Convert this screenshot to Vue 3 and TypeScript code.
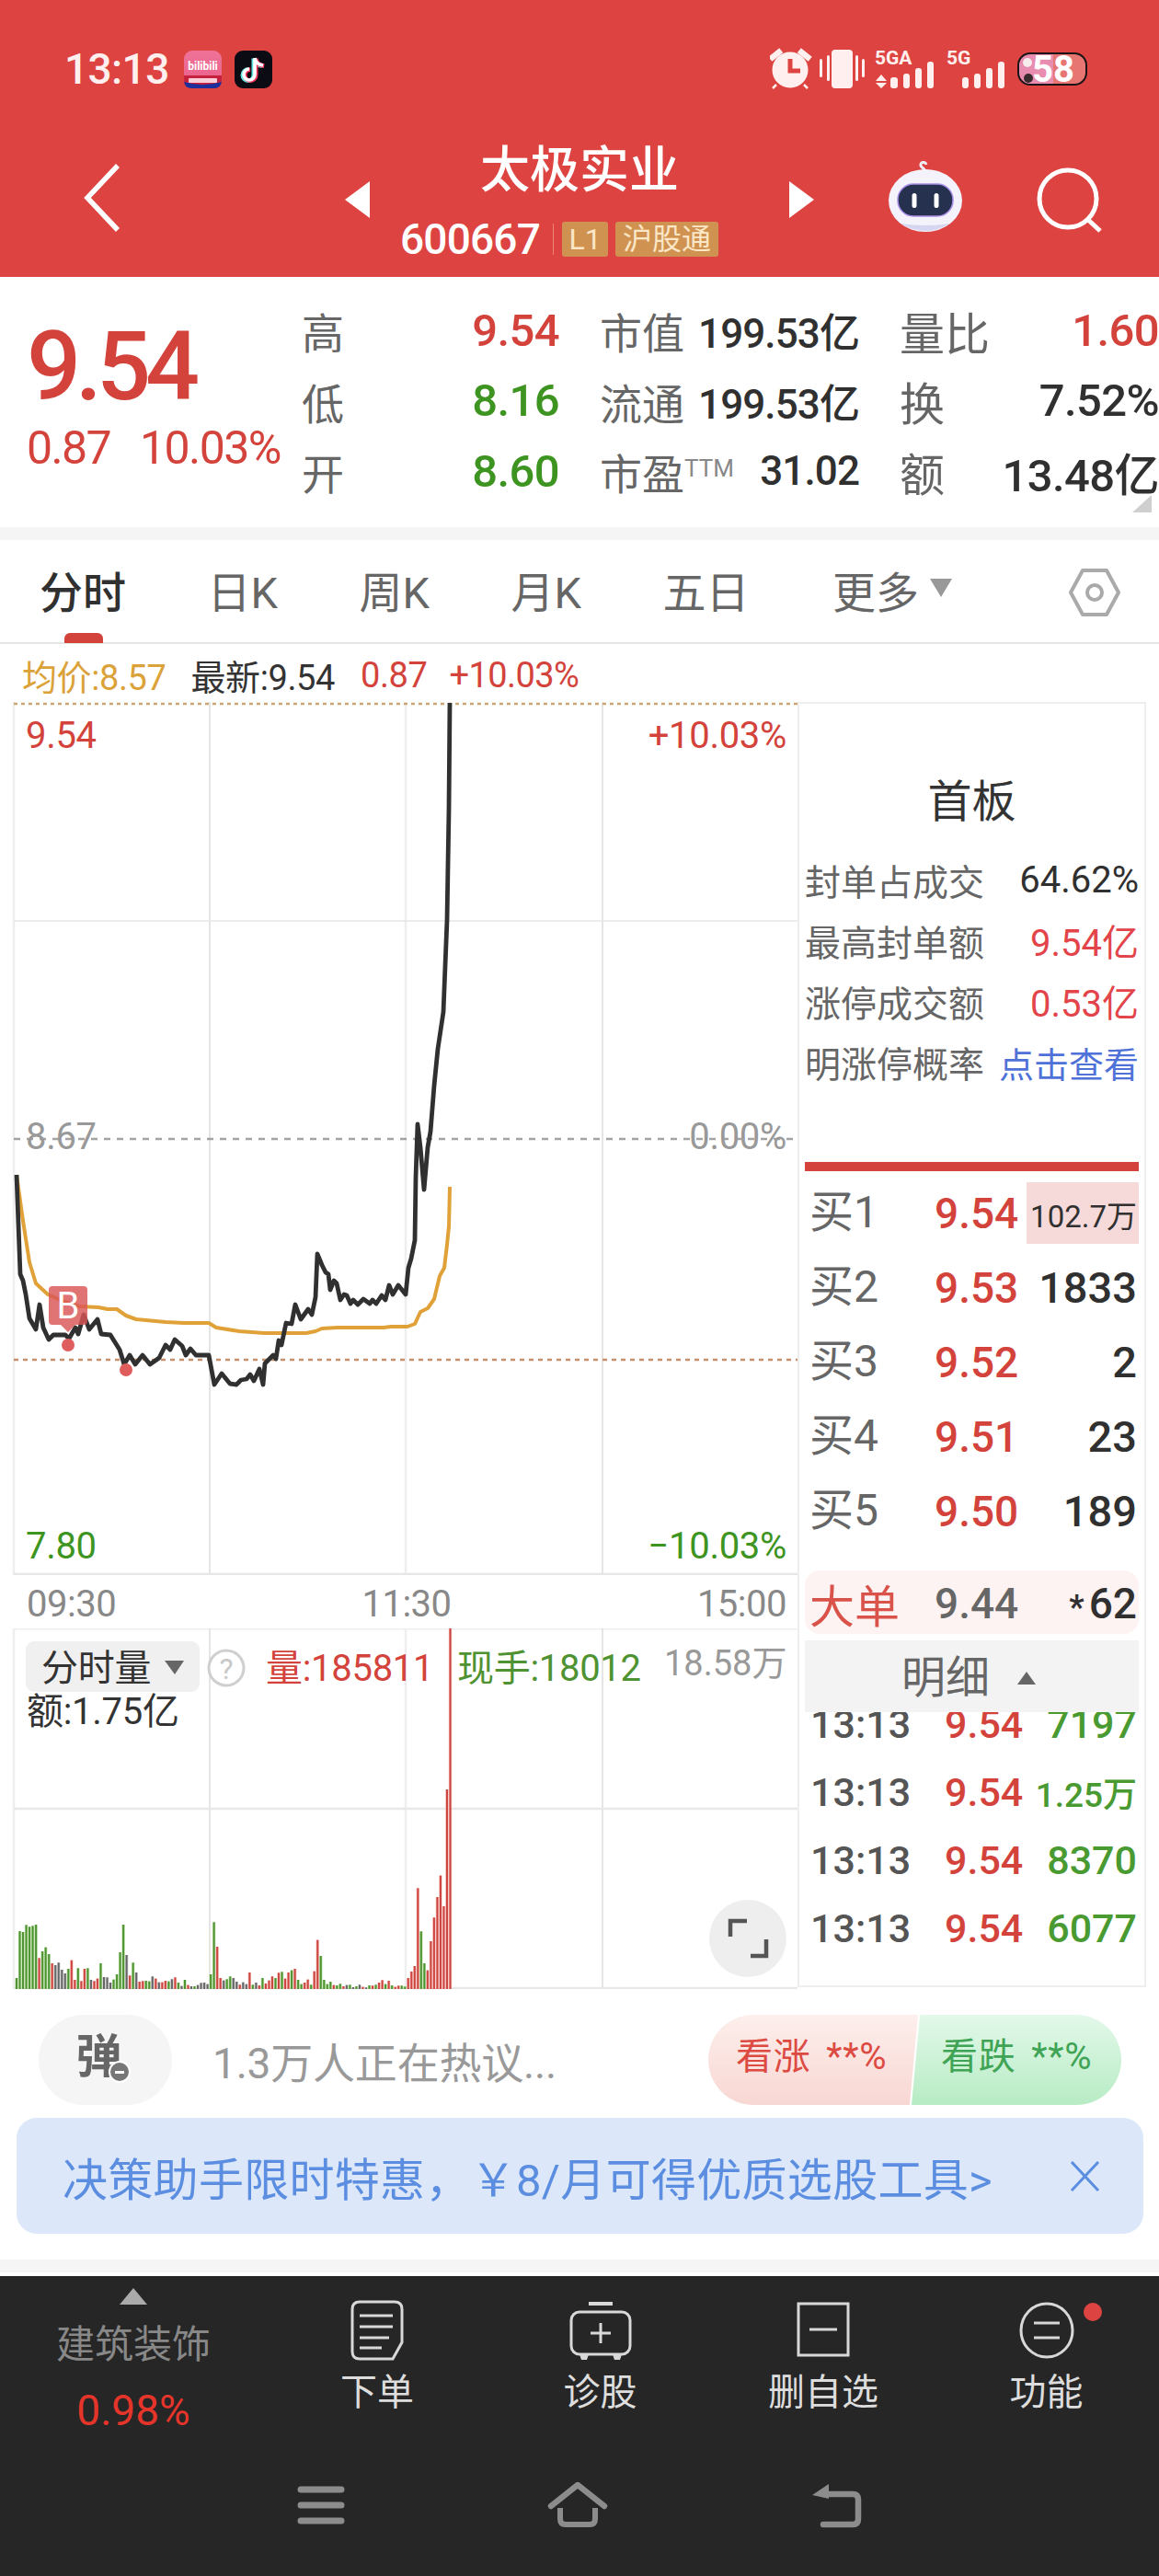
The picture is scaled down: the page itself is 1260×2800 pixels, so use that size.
<script setup lang="ts">
const blackLine =
  '18,1277 22,1385 25,1392 28,1407 32,1433 39,1445 43,1418 47,1443 53,1456 58,1451 71,1451 75,1455 82,1443 85,1450 91,1429 97,1445 106,1434 110,1450 120,1451 130,1467 135,1483 141,1473 147,1483 155,1473 163,1483 173,1476 180,1462 185,1467 190,1456 198,1463 202,1473 207,1466 213,1473 227,1473 233,1505 241,1493 250,1504 257,1505 262,1500 268,1499 272,1494 276,1501 282,1488 286,1505 288,1482 297,1473 300,1477 303,1457 306,1462 311,1438 317,1439 321,1418 327,1434 335,1423 339,1429 343,1410 345,1363 350,1375 354,1383 357,1385 359,1402 363,1392 366,1395 370,1413 374,1407 377,1408 381,1417 384,1413 389,1418 395,1412 402,1417 405,1413 409,1417 415,1408 419,1413 423,1397 427,1407 433,1397 441,1407 444,1378 447,1368 451,1348 452,1280 454,1222 457,1247 461,1293 465,1247 468,1230 472,1180 476,1140 482,1100 484,1050 486,1000 488,880 489,764'
const avgLine =
  '18,1277 25,1327 32,1372 39,1395 52,1407 70,1415 87,1420 107,1421 117,1423 127,1423 137,1430 148,1434 180,1437 200,1438 227,1438 235,1443 260,1447 287,1449 333,1449 343,1447 350,1444 367,1443 417,1443 425,1442 443,1442 451,1439 457,1426 465,1422 472,1412 478,1387 483,1378 486,1353 488,1333 489,1290'

const raw =
  'g510 g357 g360 g337 g343 g340 g336 r445 g423 g410 g432 r462 n468 n460 n483 n495 g480 r452 r516 g478 r520 r480 g478 n516 r520 r512 g462 n507 n508 n525 g515 g498 g426 g336 n435 r502 g460 n492 r522 r520 g519 g521 n505 r512 n524 r524 r519 g521 n514 r508 g525 n536 g516 r533 n537 g537 n533 n526 n525 n530 g498 g328 r408 r510 n518 g514 g505 n510 n522 r532 n524 n530 r492 g532 n525 r534 g510 r528 r518 r505 g510 r493 g490 r512 r492 g485 r480 g516 g530 r525 r515 g532 r488 r386 g438 g516 g530 g522 r533 g534 g529 r537 n533 g532 n540 g537 n532 r539 n541 g534 r535 g532 r525 r517 g530 r519 g534 r539 r535 g535 g538 r510 r489 r471 r217 g358 g462 r485 r390 r313 r246 r176 r276 r-105 r-630'
const colours: Record<string, string> = { g: '#4f9232', r: '#cc4540', n: '#666666' }
const halos: Record<string, string> = { g: '#bfe3ac', r: '#f6c0bb', n: '#cfcfcf' }
const tokens = raw.split(' ')
const step = (489.5 - 18) / (tokens.length - 1)
const bars = tokens.map((t, i) => {
  const top = 1980 + Number(t.slice(1)) / 3
  return {
    x: 18 + i * step,
    y: top,
    h: 2162 - top,
    c: colours[t[0]],
    halo: halos[t[0]]
  }
})

const stats = [
  [
    { label: '高', value: '9.54', cls: 'red' },
    { label: '市值', value: '199.53亿', cls: 'ink small' },
    { label: '量比', value: '1.60', cls: 'red', wide: true }
  ],
  [
    { label: '低', value: '8.16', cls: 'green' },
    { label: '流通', value: '199.53亿', cls: 'ink small' },
    { label: '换', value: '7.52%', cls: 'ink', wide: true }
  ],
  [
    { label: '开', value: '8.60', cls: 'green' },
    { label: '市盈', sup: 'TTM', value: '31.02', cls: 'ink small' },
    { label: '额', value: '13.48亿', cls: 'ink', wide: true }
  ]
]
const tabs = ['分时', '日K', '周K', '月K', '五日']
const seal = [
  { k: '封单占成交', v: '64.62%', c: 'ink' },
  { k: '最高封单额', v: '9.54亿', c: 'bright' },
  { k: '涨停成交额', v: '0.53亿', c: 'bright' },
  { k: '明涨停概率', v: '点击查看', c: 'blue' }
]
const book = [
  { k: '买1', p: '9.54', q: '102.7万', hot: true },
  { k: '买2', p: '9.53', q: '1833' },
  { k: '买3', p: '9.52', q: '2' },
  { k: '买4', p: '9.51', q: '23' },
  { k: '买5', p: '9.50', q: '189' }
]
const ticks = [
  { q: '7197' },
  { q: '1.25万', tiny: true },
  { q: '8370' },
  { q: '6077' }
]
</script>

<template>
  <div class="page">
    <header class="head">
      <div class="status">
        <span class="clock">13:13</span>
        <svg class="app-icon" viewBox="0 0 41 41">
          <defs>
            <linearGradient id="bl" x1="0" y1="0" x2="0" y2="1">
              <stop offset="0" stop-color="#ef7299" />
              <stop offset="1" stop-color="#ea5f8a" />
            </linearGradient>
          </defs>
          <rect width="41" height="41" rx="9" fill="url(#bl)" />
          <path d="M0 27 L41 27 L41 32 Q41 41 32 41 L9 41 Q0 41 0 32Z" fill="#c8213f" />
          <path d="M0 34 Q20 40 41 34 L41 32 Q41 41 32 41 L9 41 Q0 41 0 32Z" fill="#1c2f9a" />
          <text x="20.5" y="21" class="bili">bilibili</text>
          <rect x="5" y="30" width="31" height="5" rx="1" fill="#f7cfd8" />
        </svg>
        <svg class="app-icon" viewBox="0 0 41 41">
          <rect width="41" height="41" rx="9" fill="#0b0b14" />
          <path d="M22 8 V26 a6 6 0 1 1 -6 -6 M22 8 q1 7 9 8" fill="none" stroke="#62e6e6" stroke-width="4.6" transform="translate(-1.2 0.6)" />
          <path d="M22 8 V26 a6 6 0 1 1 -6 -6 M22 8 q1 7 9 8" fill="none" stroke="#f0365b" stroke-width="4.6" transform="translate(1.2 0.6)" />
          <path d="M22 8 V26 a6 6 0 1 1 -6 -6 M22 8 q1 7 9 8" fill="none" stroke="#ffffff" stroke-width="3.6" />
        </svg>
        <span class="spacer"></span>
        <svg class="sys" width="345" height="54" viewBox="838 48 345 54">
          <g fill="#fff0ef">
            <circle cx="860" cy="76" r="19.5" />
            <path d="M860 64 V77 H871" fill="none" stroke="#dd4441" stroke-width="5" />
            <path d="M838 62 L848 54 L850.500 57 L840.500 65Z M882 62 L872 54 L869.500 57 L879.500 65Z M845 92 L841 96 M875 92 L879 96" stroke="#fff0ef" stroke-width="2.500" />
            <rect x="892" y="64" width="3" height="20" rx="1.500" />
            <rect x="900" y="60" width="3" height="28" rx="1.500" />
            <rect x="905" y="54" width="23" height="42" rx="4" />
            <rect x="931" y="60" width="3" height="28" rx="1.500" />
            <rect x="938" y="64" width="3" height="20" rx="1.500" />
            <text x="952" y="70" class="net">5GA</text>
            <path d="M959 81 L965 88 H953Z M959 96 L953 90 H965Z" />
            <rect x="969" y="84" width="8" height="12" rx="3" />
            <rect x="983" y="80" width="7" height="16" rx="3" />
            <rect x="996" y="74" width="7" height="22" rx="3" />
            <rect x="1009" y="67" width="7" height="29" rx="3" />
            <text x="1030" y="70" class="net">5G</text>
            <rect x="1047" y="84" width="7" height="12" rx="3" />
            <rect x="1060" y="80" width="7" height="16" rx="3" />
            <rect x="1073" y="74" width="7" height="22" rx="3" />
            <rect x="1086" y="67" width="7" height="29" rx="3" />
          </g>
          <rect x="1108" y="58" width="74" height="34" rx="13" fill="#e77672" />
          <path d="M1121 58 H1146 V92 H1121 Q1108 92 1108 75 Q1108 58 1121 58Z" fill="#e88cb0" />
          <circle cx="1118" cy="68" r="5" fill="#f6ecec" />
          <circle cx="1119" cy="85" r="5" fill="#3a2c2c" />
          <rect x="1108" y="58" width="74" height="34" rx="13" fill="none" stroke="#1a1416" stroke-width="2" />
          <text x="1146" y="89" class="batt">58</text>
        </svg>
      </div>

      <div class="nav">
        <svg class="back" width="40" height="76" viewBox="0 0 40 76">
          <path d="M37 3 L4 38 L37 73" fill="none" stroke="#fff" stroke-width="5.500" />
        </svg>
        <svg class="tri-l" width="27" height="40" viewBox="0 0 27 40"><path d="M27 0 V40 L0 20Z" fill="#fff" /></svg>
        <div class="name">
          <div class="title">太极实业</div>
          <div class="code">
            <span class="num">600667</span>
            <span class="sep"></span>
            <span class="tag l1">L1</span>
            <span class="tag hk">沪股通</span>
          </div>
        </div>
        <svg class="tri-r" width="27" height="40" viewBox="0 0 27 40"><path d="M0 0 V40 L27 20Z" fill="#fff" /></svg>
        <svg class="robot" width="82" height="78" viewBox="0 0 82 78">
          <path d="M41 12 C41 8 37 8 36 5 C35 1 41 0 42 4" fill="none" stroke="#f0ecf8" stroke-width="3" />
          <ellipse cx="41" cy="43" rx="40" ry="34" fill="#f4f2fb" />
          <path d="M14 68 Q41 84 68 68 Q41 72 14 68Z" fill="#d5d6f0" />
          <rect x="11" y="25" width="60" height="35" rx="17" fill="#26304f" stroke="#a98fe8" stroke-width="1.500" />
          <rect x="26.500" y="35" width="5" height="16" rx="2.500" fill="#fff" />
          <rect x="50.500" y="35" width="5" height="16" rx="2.500" fill="#fff" />
        </svg>
        <svg class="find" width="72" height="72" viewBox="0 0 72 72">
          <circle cx="34" cy="34" r="31" fill="none" stroke="#fff" stroke-width="5" />
          <path d="M55 56 L69 69" stroke="#fff" stroke-width="5" />
        </svg>
      </div>
    </header>

    <section class="quote">
      <div class="main">
        <div class="big">9.54</div>
        <div class="chg"><span>0.87</span><span>10.03%</span></div>
      </div>
      <div class="grid">
        <template v-for="(row, r) in stats" :key="r">
          <div v-for="cell in row" :key="cell.label" class="cell">
            <span class="lab" :class="{ wide: cell.wide }">{{ cell.label }}<sup v-if="cell.sup">{{ cell.sup }}</sup></span>
            <span class="val" :class="cell.cls">{{ cell.value }}</span>
          </div>
        </template>
      </div>
      <svg class="corner" width="21" height="19" viewBox="0 0 21 19"><path d="M21 0 V19 H0Z" fill="#cfcfcf" /></svg>
    </section>
    <div class="band"></div>

    <nav class="tabs">
      <span v-for="(t, i) in tabs" :key="t" class="tab" :class="{ on: i === 0 }">{{ t }}</span>
      <span class="tab more">更多<i></i></span>
      <svg class="hex" width="58" height="54" viewBox="0 0 58 54">
        <path d="M16 3 H42 L55 27 L42 51 H16 L3 27Z" fill="none" stroke="#aaa" stroke-width="4" stroke-linejoin="round" />
        <circle cx="29" cy="27" r="8" fill="none" stroke="#aaa" stroke-width="4" />
      </svg>
    </nav>

    <div class="legend">
      <span class="gold">均价:8.57</span>
      <span class="ink2">最新:9.54</span>
      <span class="red2">0.87</span>
      <span class="red3">+10.03%</span>
    </div>

    <div class="body">
      <div class="charts">
        <svg class="price" width="867" height="949" viewBox="0 763 867 949">
          <g stroke="#e6e6e6" stroke-width="1.500">
            <line x1="15" y1="763" x2="15" y2="1712" stroke-width="2.500" stroke="#eeeeee" />
            <line x1="228" y1="763" x2="228" y2="1712" stroke="#dddddd" />
            <line x1="441" y1="763" x2="441" y2="1712" stroke-width="2.500" stroke="#eeeeee" />
            <line x1="655" y1="763" x2="655" y2="1712" stroke="#dddddd" />
            <line x1="15" y1="1001" x2="867" y2="1001" />
            <line x1="15" y1="1711" x2="867" y2="1711" stroke-width="2.500" />
          </g>
          <line x1="15" y1="765" x2="867" y2="765" stroke="#c9a876" stroke-width="2.500" stroke-dasharray="4 4" />
          <line x1="15" y1="1238" x2="867" y2="1238" stroke="#a3a3a3" stroke-width="2.500" stroke-dasharray="7 7" />
          <line x1="15" y1="1478" x2="867" y2="1478" stroke="#c8906a" stroke-width="2.500" stroke-dasharray="5 5" />

          <text x="28" y="813" class="t40 c-red">9.54</text>
          <text x="855" y="813" class="t40 c-red end">+10.03%</text>
          <text x="28" y="1249" class="t40 c-gray">8.67</text>
          <text x="855" y="1249" class="t40 c-gray end">0.00%</text>
          <text x="28" y="1694" class="t40 c-green">7.80</text>
          <text x="855" y="1694" class="t40 c-green end">−10.03%</text>

          <polyline :points="avgLine" fill="none" stroke="#e0a238" stroke-width="4" stroke-linejoin="round" />
          <polyline :points="blackLine" fill="none" stroke="#303030" stroke-width="4.800" stroke-linejoin="round" />

          <path d="M57 1398 H91 Q95 1398 95 1402 V1436 Q95 1440 91 1440 H82 L74 1448 L66 1440 H57 Q53 1440 53 1436 V1402 Q53 1398 57 1398Z" fill="#d95555" opacity=".82" />
          <text x="74" y="1433" class="mark">B</text>
          <circle cx="74" cy="1462" r="7" fill="#df5d5d" />
          <circle cx="137" cy="1489" r="7" fill="#df5d5d" />
        </svg>

        <div class="axis"><span>09:30</span><span>11:30</span><span>15:00</span></div>

        <svg class="vol" width="867" height="392" viewBox="0 1770 867 392">
          <g stroke="#e8e8e8">
            <line x1="15" y1="1770" x2="867" y2="1770" stroke-width="3" stroke="#eeeeee" />
            <line x1="15" y1="1770" x2="15" y2="2162" stroke-width="2.500" stroke="#eeeeee" />
            <line x1="228" y1="1770" x2="228" y2="2162" stroke-width="1.500" stroke="#dddddd" />
            <line x1="441" y1="1770" x2="441" y2="2162" stroke-width="2.500" stroke="#eeeeee" />
            <line x1="655" y1="1770" x2="655" y2="2162" stroke-width="1.500" stroke="#dddddd" />
            <line x1="15" y1="1966" x2="867" y2="1966" stroke-width="2.500" />
            <line x1="15" y1="2161" x2="867" y2="2161" stroke-width="2.500" />
          </g>
          <g v-for="(b, i) in bars" :key="i">
            <rect :x="b.x - 1.7" :y="b.y" width="3.400" :height="b.h" :fill="b.halo" />
            <rect :x="b.x - 1" :y="b.y" width="2" :height="b.h" :fill="b.c" />
          </g>
          <rect x="28" y="1784" width="189" height="55" rx="9" fill="#f0f0f0" />
          <text x="45" y="1827" class="t40 c-ink">分时量</text>
          <path d="M179 1805 H200 L190 1820Z" fill="#666" />
          <circle cx="246" cy="1813" r="19" fill="#fff" stroke="#cfcfcf" stroke-width="3" />
          <text x="246" y="1825" class="q">?</text>
          <text x="289" y="1827" class="t40 c-red">量:185811</text>
          <text x="497" y="1827" class="t40 c-green2">现手:18012</text>
          <text x="722" y="1821" class="t38 c-gray">18.58万</text>
          <text x="29" y="1874" class="t40 c-ink">额:1.75亿</text>
          <ellipse cx="813" cy="2107" rx="42" ry="42" fill="#eeeeee" />
          <path d="M794 2105 V2088 H812 M833 2108 V2126 H816" fill="none" stroke="#555" stroke-width="4.500" />
        </svg>
      </div>

      <aside class="panel">
        <div class="ptitle">首板</div>
        <div v-for="s in seal" :key="s.k" class="srow">
          <span class="sk">{{ s.k }}</span>
          <span class="sv" :class="s.c">{{ s.v }}</span>
        </div>
        <div class="redbar"></div>
        <div v-for="b in book" :key="b.k" class="brow">
          <span class="bk">{{ b.k }}</span>
          <span class="bp">{{ b.p }}</span>
          <span class="bq" :class="{ hot: b.hot }">{{ b.q }}</span>
        </div>
        <div class="large">
          <span class="lk">大单</span>
          <span class="lp">9.44</span>
          <span class="lq"><b>*</b>62</span>
        </div>
        <div class="detail">明细<i></i></div>
        <div class="ticks">
          <div class="ticks-in">
            <div v-for="(t, i) in ticks" :key="i" class="trow">
              <span class="tt">13:13</span>
              <span class="tp">9.54</span>
              <span class="tq" :class="{ tiny: t.tiny }">{{ t.q }}</span>
            </div>
          </div>
        </div>
      </aside>
    </div>

    <div class="social">
      <div class="danmu">弹<i></i></div>
      <div class="hotline">1.3万人正在热议...</div>
      <div class="vote">
        <span class="up">看涨 **%</span>
        <span class="down">看跌 **%</span>
      </div>
    </div>

    <div class="banner">
      <span>决策助手限时特惠，￥8/月可得优质选股工具&gt;</span>
      <svg width="33" height="33" viewBox="0 0 33 33"><path d="M2 1 L31 32 M31 1 L2 32" stroke="#5b8de0" stroke-width="3" /></svg>
    </div>
    <div class="after"></div>
    <div class="band"></div>
    <div class="gap"></div>

    <footer class="foot">
      <div class="dock">
        <div class="sector">
          <i class="up-tri"></i>
          <span class="sname">建筑装饰</span>
          <span class="spct">0.98%</span>
        </div>
        <div class="act">
          <svg width="58" height="66" viewBox="0 0 58 66">
            <path d="M10 2 H48 Q56 2 56 10 V46 L46 64 H10 Q2 64 2 56 V10 Q2 2 10 2Z" fill="none" stroke="#d8d8d8" stroke-width="3" />
            <path d="M10 17 H46 M10 29 H46 M10 41 H42 M10 52 H34" stroke="#d8d8d8" stroke-width="3" />
          </svg>
          <span>下单</span>
        </div>
        <div class="act">
          <svg width="68" height="66" viewBox="0 0 68 66">
            <path d="M21 4 H47" stroke="#d8d8d8" stroke-width="4" />
            <rect x="2" y="13" width="64" height="46" rx="9" fill="none" stroke="#d8d8d8" stroke-width="3" />
            <path d="M34 25 V47 M23 36 H45" stroke="#d8d8d8" stroke-width="3" />
            <path d="M11 59 H21 L19 65 H13Z M47 59 H57 L55 65 H49Z" fill="#d8d8d8" />
          </svg>
          <span>诊股</span>
        </div>
        <div class="act">
          <svg width="58" height="66" viewBox="0 0 58 66">
            <rect x="2" y="4" width="54" height="56" fill="none" stroke="#d8d8d8" stroke-width="3" />
            <path d="M14 32 H44" stroke="#d8d8d8" stroke-width="3" />
          </svg>
          <span>删自选</span>
        </div>
        <div class="act fn">
          <svg width="62" height="66" viewBox="0 0 62 66">
            <ellipse cx="31" cy="33" rx="28" ry="29" fill="none" stroke="#d8d8d8" stroke-width="3" />
            <path d="M17 25 H45 M17 41 H45" stroke="#d8d8d8" stroke-width="3" />
          </svg>
          <i class="dot"></i>
          <span>功能</span>
        </div>
      </div>
      <div class="sysnav">
        <svg width="52" height="50" viewBox="0 0 52 50">
          <path d="M4 8 H48 M4 25 H48 M4 42 H48" stroke="#8c8c8c" stroke-width="7" stroke-linecap="round" />
        </svg>
        <svg width="66" height="50" viewBox="0 0 66 50">
          <path d="M4 26 L33 3 L62 26" fill="none" stroke="#8c8c8c" stroke-width="6.500" stroke-linecap="round" stroke-linejoin="round" />
          <path d="M14 28 V40 Q14 46 20 46 H46 Q52 46 52 40 V28" fill="none" stroke="#8c8c8c" stroke-width="6" />
        </svg>
        <svg width="56" height="50" viewBox="0 0 56 50">
          <path d="M20 2 L2 14 L20 18Z" fill="#8c8c8c" />
          <path d="M14 13 H46 Q52 13 52 19 V40 Q52 46 46 46 H14" fill="none" stroke="#8c8c8c" stroke-width="6.500" stroke-linecap="round" />
        </svg>
      </div>
    </footer>
  </div>
</template>

<style>
html,
body {
  margin: 0;
  background: #fff;
}
</style>

<style scoped>
.page {
  width: 1260px;
  height: 2800px;
  overflow: hidden;
  display: flex;
  flex-direction: column;
  background: #fff;
  font-family: Roboto, "Noto Sans CJK SC", sans-serif;
  color: #333;
}
.head {
  height: 301px;
  background: #dd4441;
  flex: none;
}
.status {
  height: 42px;
  padding: 54px 78px 0 70px;
  display: flex;
  align-items: center;
}
.clock {
  width: 130px;
  font-size: 46px;
  font-weight: 500;
  color: #fff0ef;
  letter-spacing: -0.6px;
  line-height: 42px;
}
.app-icon {
  width: 41px;
  height: 41px;
  margin-right: 14px;
}
.spacer {
  flex: 1;
}
.bili {
  font: 700 12px Roboto, sans-serif;
  fill: #fff;
  text-anchor: middle;
}
.net {
  font: 700 21px Roboto, sans-serif;
}
.batt {
  font: 700 40px Roboto, sans-serif;
  fill: #fff;
  text-anchor: middle;
}
.nav {
  position: relative;
  height: 205px;
  display: flex;
  align-items: center;
}
.back,
.tri-l,
.tri-r,
.robot,
.find {
  position: absolute;
}
.back {
  left: 91px;
  top: 81px;
}
.tri-l {
  left: 375px;
  top: 101px;
}
.tri-r {
  left: 858px;
  top: 101px;
}
.robot {
  left: 965px;
  top: 79px;
}
.find {
  left: 1127px;
  top: 86px;
}
.name {
  width: 100%;
  padding-top: 62px;
  display: flex;
  flex-direction: column;
  align-items: center;
  align-self: flex-start;
}
.title {
  font-size: 54px;
  line-height: 56px;
  font-weight: 500;
  color: #fff;
}
.code {
  margin-top: 27px;
  margin-left: -44px;
  display: flex;
  align-items: center;
  height: 38px;
}
.num {
  font-size: 46px;
  font-weight: 500;
  color: #fff;
  line-height: 38px;
  letter-spacing: -0.8px;
}
.sep {
  width: 1px;
  height: 34px;
  background: #e98a6f;
  margin: 0 9px 0 14px;
}
.tag {
  height: 38px;
  line-height: 38px;
  border-radius: 3px;
  background: #cf9251;
  color: #fbe6c6;
  font-size: 32px;
  text-align: center;
}
.l1 {
  width: 50px;
  margin-right: 8px;
}
.hk {
  width: 112px;
  font-size: 32px;
}

.quote {
  position: relative;
  height: 272px;
  flex: none;
  display: flex;
  box-sizing: border-box;
}
.main {
  width: 328px;
  flex: none;
  padding: 48px 0 0 29px;
  box-sizing: border-box;
  color: #d3433b;
}
.big {
  font-size: 104px;
  line-height: 100px;
  font-weight: 500;
  letter-spacing: -6px;
}
.chg {
  display: flex;
  gap: 32px;
  margin-top: 8px;
  font-size: 50px;
  line-height: 60px;
  letter-spacing: -1.6px;
  white-space: nowrap;
}
.grid {
  display: grid;
  grid-template-columns: 280px 279px 279px;
  grid-auto-rows: 76.500px;
  column-gap: 47px;
  padding-top: 20px;
}
.cell {
  display: flex;
  justify-content: space-between;
  align-items: center;
  white-space: nowrap;
}
.cell:not(:nth-child(3n + 1)) .lab {
  margin-left: -3px;
}
.lab {
  font-size: 46px;
  color: #666;
}
.lab.wide {
  font-size: 49px;
}
.lab sup {
  font-size: 26px;
  color: #888;
  line-height: 0;
  vertical-align: 14px;
}
.val {
  font-size: 49px;
  font-weight: 500;
  letter-spacing: -0.6px;
}
.val.small {
  font-size: 44px;
  letter-spacing: -0.9px;
}
.red {
  color: #d3433b;
}
.green {
  color: #3d9420;
}
.ink {
  color: #303030;
}
.bright {
  color: #e2444a;
}
.blue {
  color: #4f72d9;
}
.corner {
  position: absolute;
  left: 1231px;
  top: 237px;
}
.band {
  height: 14px;
  flex: none;
  background: #f5f5f5;
}
.tabs {
  position: relative;
  height: 113px;
  flex: none;
  box-sizing: border-box;
  border-bottom: 2px solid #e5e5e5;
  padding-left: 43px;
  display: flex;
  gap: 88.500px;
  align-items: flex-start;
}
.tab {
  margin-top: 29px;
  font-size: 47px;
  line-height: 58px;
  color: #666;
  white-space: nowrap;
}
.tab.on {
  color: #303030;
  font-weight: 500;
}
.tab.on::after {
  content: "";
  position: absolute;
  left: 70px;
  bottom: -1px;
  width: 42px;
  height: 11px;
  background: #d3433b;
  border-radius: 6px 6px 0 0;
}
.more {
  margin-left: 2px;
}
.more i {
  display: inline-block;
  margin-left: 12px;
  vertical-align: 12px;
  border-left: 12px solid transparent;
  border-right: 12px solid transparent;
  border-top: 20px solid #999;
}
.hex {
  position: absolute;
  left: 1161px;
  top: 30px;
}
.legend {
  height: 63px;
  flex: none;
  display: flex;
  align-items: center;
  padding-left: 24px;
  padding-top: 4px;
  box-sizing: border-box;
  font-size: 38px;
  letter-spacing: -0.4px;
  white-space: nowrap;
}
.gold {
  color: #dca23a;
  margin-right: 27px;
}
.ink2 {
  color: #333;
  margin-right: 28px;
}
.red2 {
  color: #d3433b;
  margin-right: 24px;
}
.red3 {
  color: #d3433b;
  letter-spacing: -0.6px;
}
.body {
  display: flex;
  height: 1399px;
  flex: none;
}
.charts {
  width: 867px;
  flex: none;
}
.charts svg {
  display: block;
}
.charts text {
  font-family: Roboto, "Noto Sans CJK SC", sans-serif;
}
.t40 {
  font-size: 40px;
  letter-spacing: -0.3px;
}
.t38 {
  font-size: 38px;
}
.end {
  text-anchor: end;
}
.c-red {
  fill: #d3433b;
}
.c-gray {
  fill: #999;
}
.c-green {
  fill: #3d9420;
}
.c-green2 {
  fill: #4f9232;
}
.c-ink {
  fill: #333;
}
.mark {
  font-size: 40px;
  fill: #fff;
  text-anchor: middle;
}
.q {
  font-size: 32px;
  fill: #c8c8c8;
  text-anchor: middle;
}
.axis {
  height: 58px;
  box-sizing: border-box;
  padding: 5px 12px 0 29px;
  display: flex;
  justify-content: space-between;
  align-items: center;
  font-size: 40px;
  color: #888;
  letter-spacing: -0.5px;
}

.panel {
  width: 379px;
  height: 1397px;
  box-sizing: border-box;
  border: 2px solid #eeeeee;
  padding: 0 6px;
  flex: none;
}
.ptitle {
  margin-top: 67px;
  height: 80px;
  line-height: 80px;
  font-size: 48px;
  text-align: center;
  color: #333;
  margin-bottom: 11px;
}
.srow {
  height: 66px;
  display: flex;
  justify-content: space-between;
  align-items: center;
  white-space: nowrap;
}
.sk {
  font-size: 39px;
  color: #666;
}
.sv {
  font-size: 40px;
}
.sv.blue {
  font-size: 38px;
}
.redbar {
  height: 10px;
  margin-top: 76px;
  background: #d3433b;
  margin-bottom: 5px;
}
.brow {
  height: 81px;
  display: grid;
  grid-template-columns: 136px 100px 1fr;
  padding-left: 5px;
  align-items: center;
}
.bk {
  font-size: 48px;
  line-height: 60px;
  margin-top: -2px;
  color: #666;
}
.bp {
  font-size: 46px;
  font-weight: 500;
  color: #d3433b;
}
.bq {
  font-size: 47px;
  font-weight: 500;
  color: #303030;
  text-align: right;
  padding-right: 2px;
}
.bq.hot {
  height: 67px;
  line-height: 76px;
  background: #f6d9d9;
  font-size: 33px;
  font-weight: 400;
  white-space: nowrap;
}
.large {
  margin-top: 24px;
  height: 69px;
  border-radius: 16px;
  background: #fdf3f3;
  display: grid;
  grid-template-columns: 136px 100px 1fr;
  padding-left: 5px;
  align-items: center;
  font-size: 46px;
  font-weight: 500;
}
.lk {
  color: #d9534a;
  font-size: 49px;
  font-weight: 400;
}
.lp {
  color: #666;
}
.lq {
  text-align: right;
  padding-right: 2px;
  color: #303030;
}
.lq b {
  font-size: 36px;
  font-weight: 700;
  margin-right: 5px;
}
.detail {
  margin-top: 7px;
  height: 78px;
  background: #f3f3f3;
  font-size: 48px;
  line-height: 82px;
  color: #666;
  padding-left: 105px;
  position: relative;
  z-index: 1;
}
.detail i {
  display: inline-block;
  margin-left: 30px;
  vertical-align: 9px;
  border-left: 10px solid transparent;
  border-right: 10px solid transparent;
  border-bottom: 14px solid #666;
}
.ticks {
  height: 298px;
  overflow: hidden;
}
.ticks-in {
  margin-top: -24px;
}
.trow {
  height: 74px;
  display: grid;
  grid-template-columns: 146px auto 1fr;
  padding-left: 6px;
  align-items: center;
  font-size: 43px;
  font-weight: 500;
}
.tt {
  color: #555;
}
.tp {
  color: #d3433b;
}
.tq {
  color: #4a9a32;
  text-align: right;
  padding-right: 2px;
}
.tq.tiny {
  font-size: 37px;
  white-space: nowrap;
}

.social {
  height: 140px;
  flex: none;
  position: relative;
  display: flex;
  align-items: center;
  padding: 14px 0 0 42px;
  box-sizing: border-box;
}
.danmu {
  position: relative;
  width: 145px;
  height: 98px;
  border-radius: 49px;
  background: #f5f5f5;
  text-align: center;
  font-size: 50px;
  line-height: 92px;
  font-weight: 700;
  color: #666;
  padding-right: 14px;
  box-sizing: border-box;
}
.danmu i {
  position: absolute;
  left: 76px;
  top: 50px;
  width: 20px;
  height: 20px;
  border-radius: 50%;
  background: #777;
  border: 2px solid #fff;
}
.danmu i::after {
  content: "";
  position: absolute;
  left: 5px;
  top: 9px;
  width: 10px;
  height: 3px;
  background: #fff;
}
.hotline {
  margin-left: 44px;
  width: 539px;
  font-size: 46px;
  color: #999;
  white-space: nowrap;
  letter-spacing: -0.2px;
}
.vote {
  width: 448px;
  height: 98px;
  display: flex;
  font-size: 40px;
  word-spacing: 6px;
  letter-spacing: 0.8px;
  line-height: 92px;
  white-space: nowrap;
}
.up,
.down {
  display: block;
  flex: none;
  box-sizing: border-box;
}
.up {
  width: 228px;
  padding-left: 30px;
  border-radius: 49px 0 0 49px;
  background: linear-gradient(#fdefec, #f8d7d3);
  color: #dc4a42;
  clip-path: polygon(0 0, 100% 0, 96% 100%, 0 100%);
}
.down {
  width: 228px;
  margin-left: -7px;
  padding-left: 32px;
  border-radius: 0 49px 49px 0;
  background: linear-gradient(#e3f8ea, #b7ecc4);
  color: #3fa455;
  clip-path: polygon(4% 0, 100% 0, 100% 100%, 0 100%);
}
.banner {
  margin: 0 17px 0 18px;
  height: 126px;
  flex: none;
  border-radius: 22px;
  background: #dce8fa;
  display: flex;
  align-items: center;
  padding-left: 50px;
  color: #5b8de0;
  font-size: 49px;
  letter-spacing: 0.3px;
  white-space: nowrap;
}
.banner span {
  width: 1095px;
  flex: none;
}
.after {
  height: 28px;
  flex: none;
}
.gap {
  height: 4px;
  flex: none;
}
.foot {
  flex: 1;
  background: #262626;
}
.dock {
  height: 224px;
  display: grid;
  grid-template-columns: 290px 240px 245px 240px 245px;
}
.sector {
  display: flex;
  flex-direction: column;
  align-items: center;
}
.up-tri {
  margin-top: 13px;
  border-left: 15px solid transparent;
  border-right: 15px solid transparent;
  border-bottom: 18px solid #aaa;
}
.sname {
  margin-top: 19px;
  font-size: 42px;
  line-height: 50px;
  color: #888;
}
.spct {
  margin-top: 21px;
  font-size: 46px;
  line-height: 50px;
  color: #e5352a;
}
.act {
  position: relative;
  display: flex;
  flex-direction: column;
  align-items: center;
  padding-top: 26px;
  font-size: 40px;
  line-height: 50px;
  color: #ddd;
}
.act svg {
  display: block;
}
.act span {
  margin-top: 10px;
}
.dot {
  position: absolute;
  left: 163px;
  top: 29px;
  width: 20px;
  height: 20px;
  border-radius: 50%;
  background: #dd4441;
}
.sysnav {
  display: flex;
  justify-content: center;
  gap: 220px;
}
</style>
